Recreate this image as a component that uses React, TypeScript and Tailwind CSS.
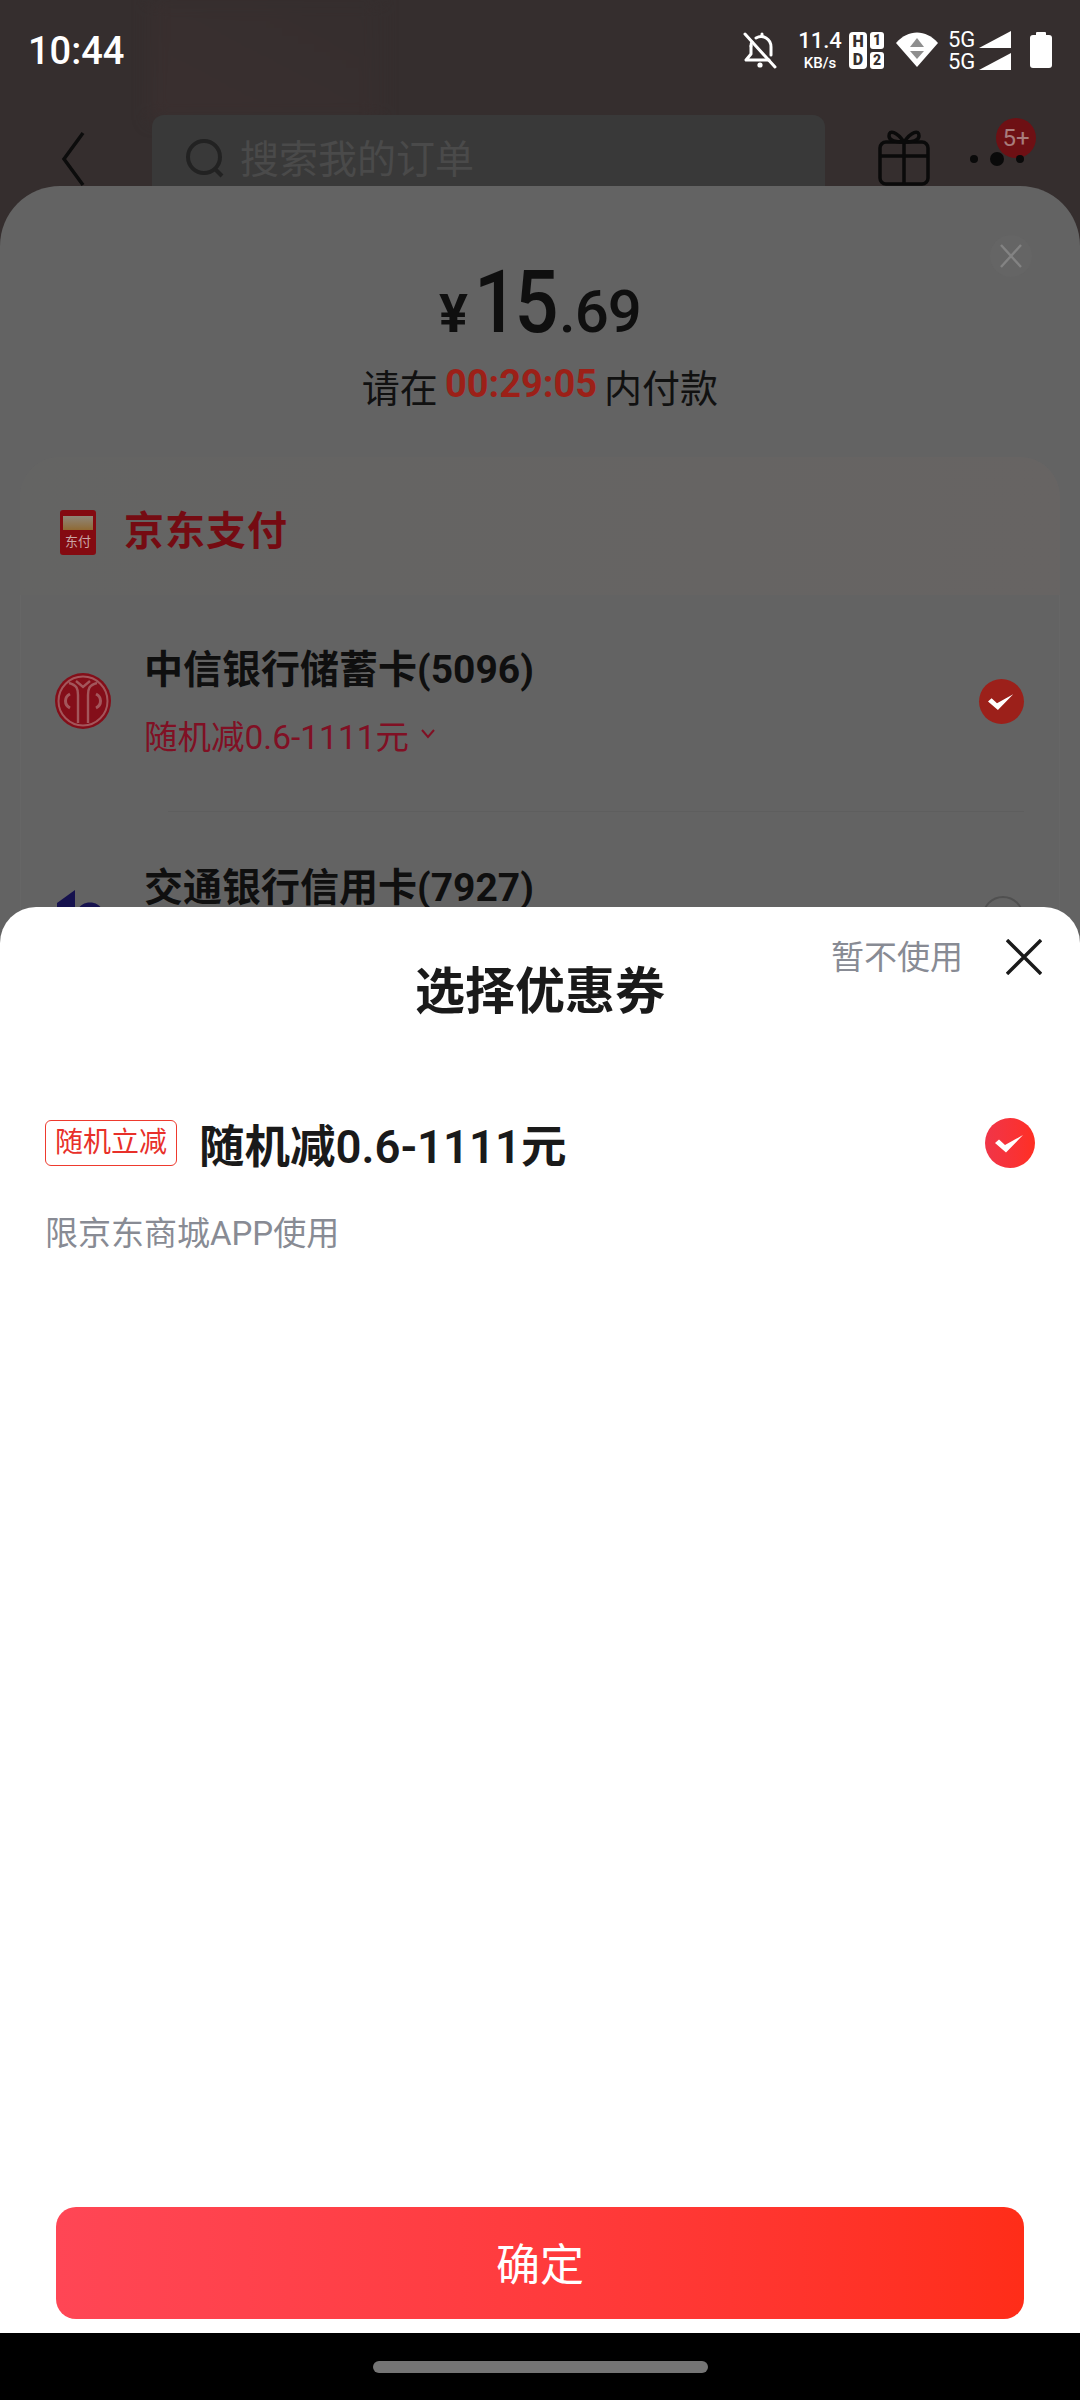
import React from "react";

const font = "font-['Roboto','Noto_Sans_CJK_SC',sans-serif]";

function StatusIcons() {
  return (
    <div className="flex items-center">
      <svg width="36" height="38" viewBox="0 0 36 38" fill="none" stroke="#fff" strokeWidth="3" strokeLinecap="round" strokeLinejoin="round" className="mr-[21px]">
        <path d="M3 3 L33 36" />
        <path d="M9 15 C9 14 9 12 10 11 M14 7 C21 3 29 8 29 16 L29 24" />
        <path d="M9 15 L9 23 L4 29 L27 29" />
        <path d="M20 3 L20 5" />
        <circle cx="18" cy="34" r="2.6" fill="#fff" stroke="none" />
      </svg>
      <div className="w-[42px] mr-[8px] flex flex-col items-center text-white">
        <span className="text-[22px] leading-[22px] font-medium">11.4</span>
        <span className="text-[15px] leading-[16px] mt-[3px] font-medium">KB/s</span>
      </div>
      <div className="mr-[12px] flex gap-[3px] text-[#352e2e] text-[16px] leading-[17px] font-black text-center">
        <div className="w-[18px] h-[37px] bg-white rounded-[4px] flex flex-col justify-between py-[1px]">
          <span>H</span><span>D</span>
        </div>
        <div className="w-[14px] h-[37px] flex flex-col justify-between text-[14px]">
          <span className="bg-white rounded-[3px]">1</span><span className="bg-white rounded-[3px]">2</span>
        </div>
      </div>
      <svg width="42" height="36" viewBox="0 0 42 36" className="mr-[10px]">
        <path d="M0 11 C12 -3 30 -3 42 11 L21 35 Z" fill="#fff" />
        <path d="M21 6 L28 15 L14 15 Z" fill="#8e8e8e" />
        <path d="M14 19 L28 19 L21 27 Z" fill="#8e8e8e" />
      </svg>
      <div className="flex flex-col gap-[4px] mr-[19px]">
        {[0, 1].map((i) => (
          <div key={i} className="flex items-end h-[18px]">
            <span className="text-white text-[22px] leading-[16px] font-normal w-[31px]">5G</span>
            <svg width="32" height="17" viewBox="0 0 32 17"><path d="M0 17 L32 0 L32 17 Z" fill="#fff" /></svg>
          </div>
        ))}
      </div>
      <div className="flex flex-col items-center">
        <div className="w-[10px] h-[3px] bg-white rounded-t-[1px]" />
        <div className="w-[22px] h-[33px] bg-white rounded-[3px]" />
      </div>
    </div>
  );
}

function Check({ size, bg }: { size: string; bg: string }) {
  return (
    <div className={`${size} ${bg} rounded-full flex items-center justify-center shrink-0`}>
      <svg viewBox="0 0 50 50" className="w-full h-full">
        <path d="M10 25 L14 21.5 L20 27 L38 17 L21 34.5 Z" fill="#fff" />
      </svg>
    </div>
  );
}

function CiticLogo() {
  return (
    <svg width="56" height="56" viewBox="0 0 56 56" className="shrink-0">
      <circle cx="28" cy="28" r="28" fill="#840e19" />
      <circle cx="28" cy="28" r="24.5" fill="none" stroke="#a3565b" strokeWidth="2" />
      <path d="M14 10 C22 12 23 16 23 22 L23 50 M42 10 C34 12 33 16 33 22 L33 50 M21 8 L28 14 L35 8" fill="none" stroke="#a3565b" strokeWidth="2.4" />
      <path d="M15 21 C9 24 9 32 15 35 M41 21 C47 24 47 32 41 35" fill="none" stroke="#a3565b" strokeWidth="3" />
    </svg>
  );
}

export default function App() {
  return (
    <div className={`${font} relative w-[1080px] h-[2400px] overflow-hidden bg-[#352e2e] flex flex-col`}>
      {/* page behind the sheets */}
      <div className="absolute left-[150px] top-0 w-[230px] h-[120px] bg-gradient-to-tr from-[#3a2f2f] to-[#352e2e] blur-[8px]" />
      <div className="relative flex items-center justify-between h-[100px] pl-[28px] pr-[28px]">
        <span className="text-white text-[38px] leading-none font-medium translate-y-[1px]">10:44</span>
        <StatusIcons />
      </div>
      <div className="relative flex items-start h-[240px]">
        <svg width="24" height="56" viewBox="0 0 24 56" fill="none" stroke="#0c0c0c" strokeWidth="3.5" className="ml-[61px] mt-[31px] shrink-0">
          <path d="M22 2 L3 28 L22 54" />
        </svg>
        <div className="ml-[67px] mt-[15px] w-[673px] h-[110px] rounded-[12px] bg-[#393939] flex items-start pl-[33px] pt-[23px] shrink-0">
          <svg width="40" height="40" viewBox="0 0 40 40" fill="none" stroke="#222" strokeWidth="4">
            <circle cx="19" cy="19" r="16" />
            <path d="M30 31 L37 38" />
          </svg>
          <span className="ml-[15px] text-[39px] leading-[44px] text-[#4a4a4a]">搜索我的订单</span>
        </div>
        <svg width="54" height="58" viewBox="0 0 54 58" fill="none" stroke="#0a0a0a" strokeWidth="3.5" className="ml-[52px] mt-[28px] shrink-0">
          <rect x="3" y="14" width="48" height="42" rx="6" />
          <path d="M3 28 L51 28 M27 14 L27 56" />
          <path d="M27 14 C20 4 12 1 12 8 C12 12 18 14 27 14 C36 14 42 12 42 8 C42 1 34 4 27 14 Z" />
        </svg>
        <div className="relative ml-[39px] mt-[52px] flex items-center gap-[12px] shrink-0">
          <div className="absolute left-[26px] top-[-34px] w-[40px] h-[40px] rounded-full bg-[#6e1014] flex items-center justify-center text-[#a87c7c] text-[24px] leading-none">5+</div>
          <div className="relative w-[8px] h-[8px] rounded-full bg-[#0a0a0a]" />
          <div className="relative w-[14px] h-[14px] rounded-full bg-[#0a0a0a]" />
          <div className="relative w-[8px] h-[8px] rounded-full bg-[#0a0a0a]" />
        </div>
      </div>

      {/* payment sheet */}
      <div className="absolute left-0 top-[186px] w-[1080px] h-[1000px] rounded-t-[60px] bg-[#636363] flex flex-col items-center">
        <div className="absolute left-[990px] top-[49px] w-[42px] h-[42px] rounded-full bg-[#656565] flex items-center justify-center">
          <svg width="22" height="24" viewBox="0 0 22 24" stroke="#838383" strokeWidth="2.4"><path d="M1 1 L21 23 M21 1 L1 23" /></svg>
        </div>
        <div className="flex items-baseline justify-center mt-[72px] text-[#0f0f0f] h-[88px]">
          <span className="text-[54px] leading-none font-bold mr-[6px]">¥</span>
          <span className="inline-block origin-left scale-x-[.88] mr-[-11px] text-[88px] leading-none font-medium tracking-[-4px]">15</span>
          <span className="text-[60px] leading-none font-medium ml-[4px] tracking-[-1px]">.69</span>
        </div>
        <div className="flex items-center mt-[23px] h-[40px] text-[38px] leading-[40px] text-[#111111]">
          <span>请在</span>
          <span className="mx-[7px] font-bold text-[#9c2018] -translate-y-[5px]">00:29:05</span>
          <span>内付款</span>
        </div>

        <div className="mt-[48px] w-[1040px] flex-1 rounded-[40px] bg-[#656565] flex flex-col overflow-hidden">
          <div className="h-[138px] shrink-0 bg-gradient-to-r from-[#646463] to-[#676463] flex items-center pl-[40px] pt-[12px]">
            <div className="w-[36px] h-[45px] rounded-[3px] bg-[#840a11] flex flex-col items-center pt-[6px] shrink-0">
              <div className="w-[30px] h-[14px] bg-gradient-to-b from-[#8e8678] to-[#8f6a33]" />
              <span className="mt-[5px] text-[13px] leading-[14px] text-[#c9a6a6]">东付</span>
            </div>
            <span className="ml-[28px] text-[40px] leading-[44px] tracking-[1px] font-bold text-[#750b12]">京东支付</span>
          </div>
          <div className="flex-1 bg-[#636363] border-x border-[#666666]">
            <div className="h-[216px] flex items-center pl-[34px] pr-[35px] pb-[4px]">
              <CiticLogo />
              <div className="ml-[33px] flex-1 flex flex-col pt-[3px]">
                <span className="text-[39px] leading-[48px] font-bold text-[#0f0f0f]">中信银行储蓄卡(5096)</span>
                <span className="mt-[22px] h-[44px] flex items-center text-[33.5px] leading-[44px] text-[#801024]">
                  随机减0.6-1111元
                  <svg width="14" height="10" viewBox="0 0 14 10" fill="none" stroke="#801024" strokeWidth="2" className="ml-[12px] -translate-y-[4px]"><path d="M1 1 L7 8 L13 1" /></svg>
                </span>
              </div>
              <Check size="w-[45px] h-[45px]" bg="bg-[#9c201a]" />
            </div>
            <div className="ml-[147px] mr-[35px] h-[1px] bg-[#5e5e5e]" />
            <div className="h-[216px] flex items-center pl-[34px] pr-[35px]">
              <svg width="56" height="56" viewBox="0 0 56 56" className="shrink-0 -mt-[4px]">
                <path d="M2 13 L20 0 L20 20 L2 20 Z M23 20 C26 10 44 10 47 20 Z" fill="#16124e" />
              </svg>
              <div className="ml-[33px] flex-1 flex flex-col pb-[65px]">
                <span className="text-[39px] leading-[48px] font-bold text-[#0f0f0f]">交通银行信用卡(7927)</span>
              </div>
              <div className="w-[42px] h-[42px] -mt-[6px] rounded-full border-2 border-[#505050] shrink-0" />
            </div>
          </div>
        </div>
      </div>

      {/* coupon sheet */}
      <div className="absolute left-0 top-[907px] w-[1080px] h-[1426px] rounded-t-[36px] bg-white flex flex-col">
        <div className="relative h-[166px] shrink-0 flex justify-center">
          <span className="mt-[53px] text-[50px] leading-[64px] font-bold text-[#1a1a1a]">选择优惠券</span>
          <span className="absolute left-[831px] top-[31px] text-[33px] leading-[40px] text-[#888b94]">暂不使用</span>
          <svg width="36" height="36" viewBox="0 0 36 36" stroke="#1a1a1a" strokeWidth="3.4" className="absolute left-[1006px] top-[32px]"><path d="M1 1 L35 35 M35 1 L1 35" /></svg>
        </div>
        <div className="flex items-center pl-[45px] pr-[45px] mt-[37px]">
          <div className="h-[46px] w-[132px] flex items-center justify-center rounded-[6px] border border-[#ee3a2e] text-[28px] leading-none text-[#e8302a] shrink-0">随机立减</div>
          <span className="ml-[22px] pt-[10px] flex-1 text-[45.5px] leading-[56px] font-semibold text-[#1a1a1a]">随机减0.6-1111元</span>
          <Check size="w-[50px] h-[50px]" bg="bg-gradient-to-r from-[#f03548] to-[#ff2f22]" />
        </div>
        <span className="ml-[45px] mt-[36px] text-[33px] leading-[44px] text-[#888b94]">限京东商城APP使用</span>
        <div className="flex-1" />
        <div className="mx-[56px] mb-[14px] h-[112px] pt-[5px] rounded-[20px] bg-gradient-to-r from-[#ff4655] to-[#ff2d18] flex items-center justify-center text-white text-[44px] leading-none">确定</div>
      </div>

      <div className="absolute left-0 top-[2333px] w-[1080px] h-[67px] bg-black flex justify-center pt-[28px]">
        <div className="w-[335px] h-[12px] rounded-full bg-[#757575]" />
      </div>
    </div>
  );
}
